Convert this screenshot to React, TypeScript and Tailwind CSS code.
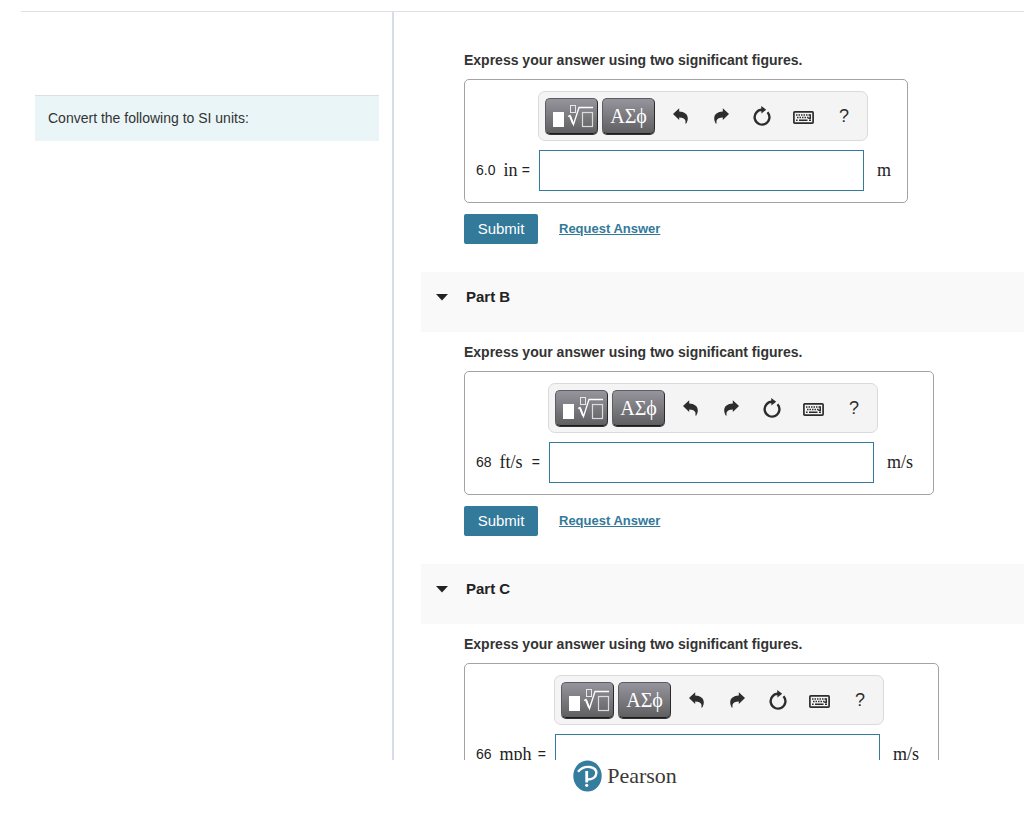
import { useState } from 'react'

interface Part {
  id: string
  value: string
  unit: string
  target: string
  labelWidth: string
  targetWidth: string
}

const parts: Part[] = [
  { id: 'A', value: '6.0', unit: 'in', target: 'm', labelWidth: 'w-[62px]', targetWidth: 'w-[14px]' },
  { id: 'B', value: '68', unit: 'ft/s', target: 'm/s', labelWidth: 'w-[72px]', targetWidth: 'w-[30px]' },
  { id: 'C', value: '66', unit: 'mph', target: 'm/s', labelWidth: 'w-[78px]', targetWidth: 'w-[29px]' },
]

const serif = "font-['Liberation_Serif',serif]"

const keyClass =
  'flex h-[36px] w-[53px] items-center justify-center rounded-[5px] border border-[#5c5c62] border-r-[#2a2a2a] border-b-[#1c1c1c] bg-linear-to-b from-[#96959d] to-[#606062] text-white shadow-[0_1px_0_#333]'

const toolClass = 'flex h-9 w-10 items-center justify-center text-[#2d2d2d]'

function TemplatesIcon() {
  return (
    <svg width="45" height="24" viewBox="0 0 45 24" fill="none" aria-hidden="true">
      <rect x="4" y="8" width="11" height="15" fill="#fff" />
      <rect x="21.5" y="1.5" width="5" height="7" stroke="#e8e8e8" />
      <path d="M19 12.5l2-1 3.500 9L30 3.500h14" stroke="#fff" strokeWidth="1.300" />
      <path d="M21 12l3.200 8" stroke="#fff" strokeWidth="2" />
      <rect x="33.500" y="8.500" width="10" height="14" stroke="#dcdcdc" strokeWidth="1.200" />
    </svg>
  )
}

function UndoIcon() {
  return (
    <svg width="15" height="17" viewBox="0 0 15 17" aria-hidden="true">
      <path d="M0 6L6.200.3v3.200c5.200.2 8.500 2.600 8.600 6.800 0 2-.7 3.800-1.500 5.300h-1c.3-1.200.4-2 .1-3-.7-2.200-2.800-3-6.200-3.100V12z" fill="currentColor" />
    </svg>
  )
}

function RedoIcon() {
  return (
    <svg width="15" height="17" viewBox="0 0 15 17" aria-hidden="true">
      <path d="M15 6L8.800.3v3.200C3.600 3.700.3 6.100.2 10.300c0 2 .7 3.800 1.500 5.300h1c-.3-1.200-.4-2-.1-3 .7-2.200 2.800-3 6.200-3.100V12z" fill="currentColor" />
    </svg>
  )
}

function ResetIcon() {
  return (
    <svg width="18" height="20" viewBox="0 0 18 20" fill="none" aria-hidden="true">
      <path d="M14.500 6.200A7.400 7.400 0 1 1 9 3.800" stroke="currentColor" strokeWidth="2.400" />
      <path d="M8.200 0l5 3.700-4.800 3.800z" fill="currentColor" />
    </svg>
  )
}

function KeyboardIcon() {
  return (
    <svg width="21" height="13" viewBox="0 0 21 13" fill="none" aria-hidden="true">
      <rect x=".9" y=".9" width="19.200" height="11.200" rx=".8" stroke="currentColor" strokeWidth="1.700" />
      <path d="M3 4h15" stroke="currentColor" strokeWidth="1.400" strokeDasharray="1.500 1" />
      <path d="M4 6.500h12" stroke="currentColor" strokeWidth="1.400" strokeDasharray="1.500 1" />
      <path d="M17.300 3.300v3.900h-2" stroke="currentColor" strokeWidth="1.400" />
      <path d="M3 9.300h1.600M6 9.300h8.500M16 9.300h2" stroke="currentColor" strokeWidth="1.500" />
    </svg>
  )
}

function Toolbar() {
  return (
    <div className="flex h-[50px] w-[330px] items-start rounded-[7px] border border-[#dadada] bg-[#f4f4f4] pt-[6px] pl-[6px]">
      <div className="flex gap-1">
        <button type="button" aria-label="Templates" className={keyClass}>
          <TemplatesIcon />
        </button>
        <button type="button" aria-label="Symbols" className={`${keyClass} ${serif} text-[20px] leading-5`}>
          ΑΣϕ
        </button>
      </div>
      <div className="ml-[5px] flex gap-px">
        <button type="button" aria-label="Undo" className={toolClass}>
          <UndoIcon />
        </button>
        <button type="button" aria-label="Redo" className={toolClass}>
          <RedoIcon />
        </button>
        <button type="button" aria-label="Reset" className={toolClass}>
          <ResetIcon />
        </button>
        <button type="button" aria-label="Keyboard shortcuts" className={`${toolClass} pt-[3px]`}>
          <KeyboardIcon />
        </button>
        <button type="button" aria-label="Help" className={`${toolClass} text-[18px]`}>
          ?
        </button>
      </div>
    </div>
  )
}

function AnswerForm({ part }: { part: Part }) {
  const [answer, setAnswer] = useState('')
  const inputId = `answer-${part.id}`

  return (
    <form className="ml-[43px]" onSubmit={(e) => e.preventDefault()}>
      <p className="text-[14px] leading-5 font-bold text-[#333]">Express your answer using two significant figures.</p>

      <div className="mt-[9px] flex w-fit items-end rounded-[5px] border border-[#a3a3a3] py-[11px] pr-4 pl-[11px]">
        <label htmlFor={inputId} className={`${part.labelWidth} flex h-[41px] items-center pr-2 text-[14px] text-[#222]`}>
          <span>{part.value}</span>
          <span className={`${serif} ml-2 text-[18px]`}>{part.unit}</span>
          <span className="ml-auto">=</span>
        </label>
        <div>
          <Toolbar />
          <input
            id={inputId}
            type="text"
            value={answer}
            onChange={(e) => setAnswer(e.target.value)}
            className="mt-[9px] ml-px block h-[41px] w-[325px] border border-[#327b9c] bg-white px-2 text-[16px] outline-none"
          />
        </div>
        <span className={`${part.targetWidth} ${serif} ml-[9px] flex h-[41px] items-center text-[18px] text-[#222]`}>
          {part.target}
        </span>
      </div>

      <div className="mt-[11px] flex items-center">
        <button type="submit" className="h-[30px] w-[74px] rounded-[2px] bg-[#32799a] text-[15px] text-white">
          Submit
        </button>
        <a href="#request" className="ml-[21px] text-[13px] leading-5 font-bold text-[#32799a] underline">
          Request Answer
        </a>
      </div>
    </form>
  )
}

function PartHeader({ id }: { id: string }) {
  return (
    <h2 className="mt-7 mb-[10px] h-[60px] bg-[#f9f9f9]">
      <button type="button" aria-expanded="true" className="flex h-[50px] items-center pl-[15px] text-[15px] font-bold text-[#222]">
        <svg width="12" height="7" viewBox="0 0 12 7" aria-hidden="true">
          <path d="M0 0h12L6 6.500z" fill="#222" />
        </svg>
        <span className="ml-[18px]">Part {id}</span>
      </button>
    </h2>
  )
}

function PearsonLogo() {
  return (
    <div className="flex items-center gap-[5px]">
      <svg width="29" height="32" viewBox="0 0 29 32" fill="none" aria-hidden="true">
        <ellipse cx="14.500" cy="16" rx="14.200" ry="15.500" fill="#347d9e" />
        <path d="M5 11.800C8.500 7.600 13 6.400 17 7c4.200.7 6.500 3.200 6.300 6.400-.3 4-4.300 6.300-9.400 6.100" stroke="#fff" strokeWidth="2.400" />
        <path d="M13.700 11v11.500" stroke="#fff" strokeWidth="2.800" />
        <circle cx="13.700" cy="25.300" r="1.600" fill="#fff" />
      </svg>
      <span className={`${serif} text-[22px] leading-8 text-[#3c3936]`}>Pearson</span>
    </div>
  )
}

export default function App() {
  return (
    <div className="flex h-screen flex-col bg-white pt-[11px] font-['Liberation_Sans',Arial,sans-serif] text-[#333]">
      <div className="ml-[21px] border-t border-[#dedfe2]" />
      <main className="flex min-h-0 flex-1">
        <section className="w-[394px] shrink-0 border-r-2 border-[#d8dce8] pt-[83px] pr-[13px] pl-[35px]">
          <p className="border-t border-[#dcdfe0] bg-[#eaf5f7] px-[13px] py-3 text-[14px] leading-[21px]">
            Convert the following to SI units:
          </p>
        </section>
        <section className="min-w-0 flex-1 overflow-x-hidden overflow-y-auto pt-[38px] pl-[27px] [scrollbar-width:none]">
          {parts.map((part, idx) => (
            <div key={part.id}>
              {idx > 0 && <PartHeader id={part.id} />}
              <AnswerForm part={part} />
            </div>
          ))}
        </section>
      </main>
      <footer className="flex h-[57px] shrink-0 items-start justify-center pl-[226px]">
        <PearsonLogo />
      </footer>
    </div>
  )
}
